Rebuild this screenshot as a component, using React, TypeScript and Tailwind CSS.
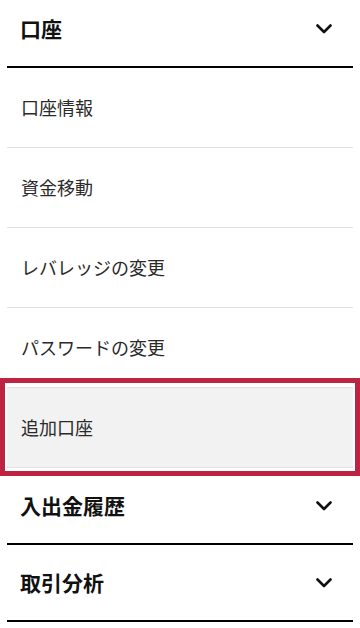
import React from "react";

const Chevron = () => (
  <svg width="16" height="10" viewBox="0 0 16 10" fill="none" className="shrink-0">
    <path d="M1.5 1.5 L8 8 L14.5 1.5" stroke="#111" strokeWidth="2.6" strokeLinecap="round" strokeLinejoin="round" />
  </svg>
);

const Header = ({ label }: { label: string }) => (
  <div className="flex h-[77px] items-center justify-between border-b-2 border-black pl-[13px] pr-[21px]">
    <span className="text-[21px] font-bold text-[#111]">{label}</span>
    <Chevron />
  </div>
);

const Item = ({ label, active }: { label: string; active?: boolean }) => (
  <div className={`relative flex h-[80px] items-center border-b border-[#e2e2e2] pl-[14px] ${active ? "bg-[#f2f2f2]" : ""}`}>
    <span className="text-[18px] text-[#2a2a2a]">{label}</span>
    {active && (
      <div className="pointer-events-none absolute -left-[7px] -right-[7px] -top-[10px] -bottom-[9px] border-[5px] border-[#bf2342]" />
    )}
  </div>
);

export default function App() {
  return (
    <div className="h-[628px] w-[360px] overflow-hidden bg-white" style={{ fontFamily: '"Noto Sans CJK JP", "Noto Sans", sans-serif' }}>
      <div className="-mt-[9px] px-[7px]">
        <Header label="口座" />
        <Item label="口座情報" />
        <Item label="資金移動" />
        <Item label="レバレッジの変更" />
        <Item label="パスワードの変更" />
        <Item label="追加口座" active />
        <Header label="入出金履歴" />
        <Header label="取引分析" />
      </div>
    </div>
  );
}
